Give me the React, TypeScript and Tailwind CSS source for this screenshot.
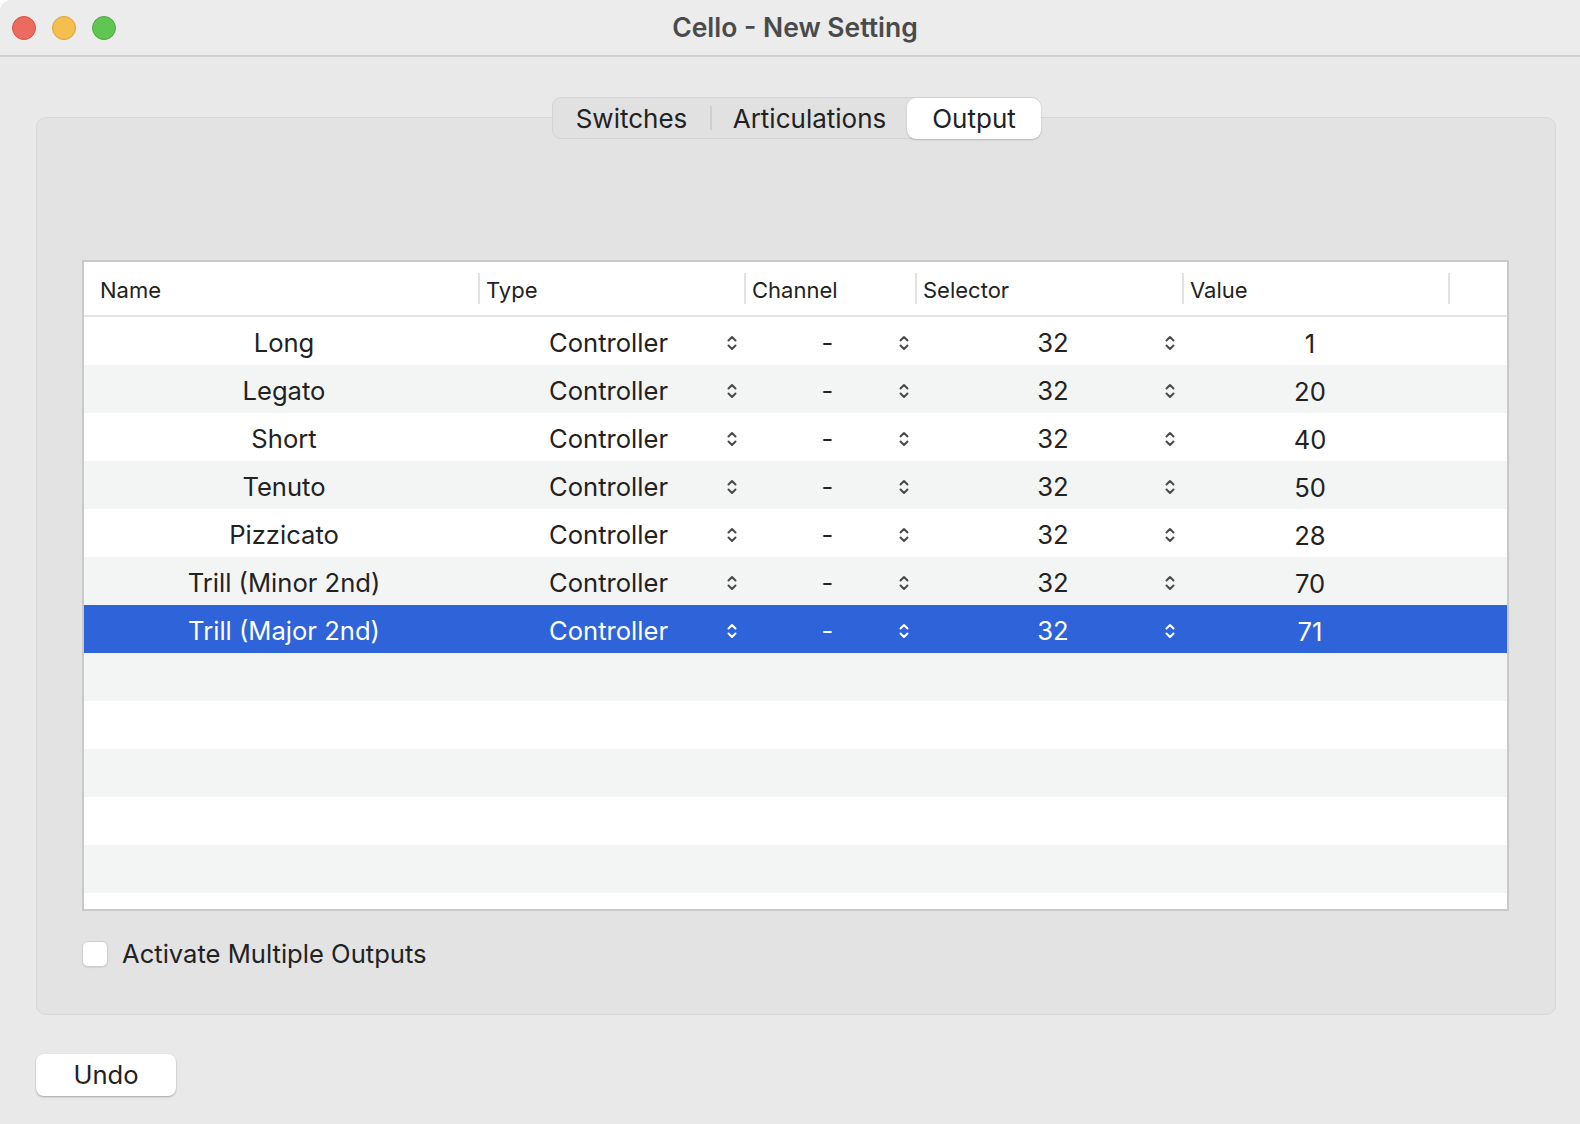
import { ReactNode } from "react"

const rows = [
  { name: "Long", value: "1" },
  { name: "Legato", value: "20" },
  { name: "Short", value: "40" },
  { name: "Tenuto", value: "50" },
  { name: "Pizzicato", value: "28" },
  { name: "Trill (Minor 2nd)", value: "70" },
  { name: "Trill (Major 2nd)", value: "71" },
]

const font = { fontFamily: "Inter, 'Noto Sans', sans-serif" }

function Stepper({ selected }: { selected?: boolean }) {
  return (
    <svg width="12" height="18" viewBox="0 0 12 18" className={`mt-[4px] ${selected ? "text-white" : "text-[#4a4a4a]"}`}>
      <path d="M2.5 6.5 L6 3 L9.5 6.5" fill="none" stroke="currentColor" strokeWidth="2" strokeLinecap="round" strokeLinejoin="round" />
      <path d="M2.5 11.5 L6 15 L9.5 11.5" fill="none" stroke="currentColor" strokeWidth="2" strokeLinecap="round" strokeLinejoin="round" />
    </svg>
  )
}

function HeaderCell({ children, className }: { children?: ReactNode; className: string }) {
  return (
    <div className={`flex items-center ${className}`}>
      <span className="pt-[3px]">{children}</span>
    </div>
  )
}

export default function App() {
  const empty = [7, 8, 9, 10, 11]
  return (
    <div className="w-[1580px] h-[1124px] bg-[#e9e9e9] flex flex-col overflow-hidden rounded-tl-[12px]" style={font}>
      {/* Title bar */}
      <div className="h-[57px] shrink-0 bg-[#ececec] border-b-2 border-[#d0d0d0] flex items-center relative">
        <div className="flex items-center gap-[16px] pl-[12px] relative z-10">
          <span className="w-[24px] h-[24px] rounded-full bg-[#ec6a5e] border border-[#d65246]" />
          <span className="w-[24px] h-[24px] rounded-full bg-[#f4bf4f] border border-[#d8a13a]" />
          <span className="w-[24px] h-[24px] rounded-full bg-[#61c554] border border-[#4fa944]" />
        </div>
        <div className="absolute inset-0 pl-[10px] flex items-center justify-center text-[26.5px] font-semibold text-[#4a4a4a]">
          Cello - New Setting
        </div>
      </div>

      {/* Body */}
      <div className="relative px-[36px] pt-[60px]">
        <div className="h-[898px] w-[1520px] rounded-[10px] bg-[#e3e3e3] border border-[#d8d8d8] flex flex-col pl-[45px] pt-[142px]">
          {/* Table */}
          <div className="w-[1427px] h-[651px] bg-white border-2 border-[#c9c9c9] flex flex-col overflow-hidden">
            <div className="h-[55px] shrink-0 flex items-center border-b-2 border-[#e4e4e4] text-[22px] text-[#222]">
              <HeaderCell className="w-[394px] pl-[16px]">Name</HeaderCell>
              <HeaderCell className="w-[266px] border-l-2 border-[#e2e2e2] h-[31px] pl-[6px]">Type</HeaderCell>
              <HeaderCell className="w-[171px] border-l-2 border-[#e2e2e2] h-[31px] pl-[6px]">Channel</HeaderCell>
              <HeaderCell className="w-[267px] border-l-2 border-[#e2e2e2] h-[31px] pl-[6px]">Selector</HeaderCell>
              <HeaderCell className="w-[266px] border-l-2 border-[#e2e2e2] h-[31px] pl-[6px]">Value</HeaderCell>
              <div className="border-l-2 border-[#e2e2e2] h-[31px]" />
            </div>
            {rows.map((r, i) => {
              const selected = i === rows.length - 1
              const bg = selected ? "bg-[#2e63d9] text-white" : i % 2 === 0 ? "bg-white text-[#222]" : "bg-[#f3f4f4] text-[#222]"
              return (
                <div key={r.name} className={`h-[48px] shrink-0 flex items-center text-[25.6px] ${bg}`}>
                  <div className="w-[394px] text-center pl-[6px] pt-[4px]">{r.name}</div>
                  <div className="w-[266px] flex items-center pl-[71px]">
                    <span className="w-[177px] pt-[4px]">Controller</span>
                    <Stepper selected={selected} />
                  </div>
                  <div className="w-[171px] flex items-center">
                    <span className="w-[154px] text-center pl-[13px] pt-[4px]">-</span>
                    <Stepper selected={selected} />
                  </div>
                  <div className="w-[267px] flex items-center">
                    <span className="w-[249px] text-center pl-[27px] pt-[4px]">32</span>
                    <Stepper selected={selected} />
                  </div>
                  <div className="w-[266px] text-center pt-[7px] pr-[10px]">{r.value}</div>
                </div>
              )
            })}
            {empty.map((i) => (
              <div key={i} className={`h-[48px] shrink-0 ${i % 2 === 1 ? "bg-[#f3f4f4]" : "bg-white"}`} />
            ))}
          </div>

          {/* Checkbox */}
          <div className="flex items-center gap-[14px] mt-[24px]">
            <span className="w-[26px] h-[26px] rounded-[6px] bg-white border border-[#cfcfcf] shadow-[0_1px_1px_rgba(0,0,0,0.08)]" />
            <span className="text-[25.6px] text-[#222]">Activate Multiple Outputs</span>
          </div>
        </div>

        {/* Segmented control */}
        <div className="absolute left-[552px] top-[40px] h-[42px] w-[489px] rounded-[9px] bg-[#e1e1e1] border border-[#d4d4d4] flex items-center text-[26px] text-[#222]">
          <div className="w-[157px] text-center">Switches</div>
          <div className="w-[2px] h-[24px] bg-[#cfcfcf]" />
          <div className="w-[195px] text-center">Articulations</div>
          <div className="flex-1 h-[41px] mr-[-1px] rounded-[9px] bg-white shadow-[0_1px_2px_rgba(0,0,0,0.2)] flex items-center justify-center">
            Output
          </div>
        </div>

        {/* Undo */}
        <div className="mt-[39px] w-[140px] h-[42px] rounded-[8px] bg-white shadow-[0_1px_2px_rgba(0,0,0,0.3)] flex items-center justify-center text-[25.6px] text-[#222]">
          Undo
        </div>
      </div>
    </div>
  )
}
